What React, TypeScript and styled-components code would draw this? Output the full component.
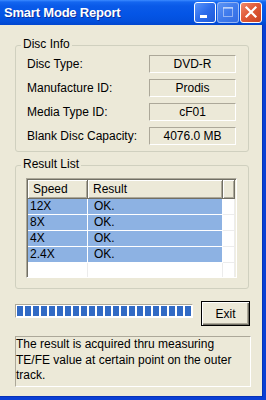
import React from 'react';
import styled, { createGlobalStyle } from 'styled-components';

const Global = createGlobalStyle`
  html, body { margin: 0; padding: 0; background: #ECE9D8; }
  body { font-family: "Liberation Sans", Arial, sans-serif; font-size: 12px; color: #000; }
  #root { width: 266px; height: 400px; }
  * { box-sizing: border-box; }
`;

const Window = styled.div`
  width: 266px;
  height: 400px;
  display: flex;
  flex-direction: column;
  background: #ECE9D8;
  overflow: hidden;
`;

const TitleBar = styled.div`
  height: 25px;
  flex: none;
  display: flex;
  align-items: flex-start;
  padding: 0 4px 0 4px;
  background: linear-gradient(
    180deg,
    #3B8BFF 0px,
    #1466F0 2px,
    #0A5AE8 6px,
    #0455E6 14px,
    #0350DD 21px,
    #0246CF 25px
  );
`;

const Title = styled.div`
  flex: 1;
  color: #fff;
  font-family: "Liberation Sans", Arial, sans-serif;
  font-weight: bold;
  font-size: 13px;
  letter-spacing: -0.2px;
  line-height: 25px;
  text-shadow: 1px 1px 0 #0B2F9E;
`;

const CaptionButtons = styled.div`
  display: flex;
  gap: 1px;
  margin-top: 2px;
`;

const CaptionButton = styled.div<{ $kind: 'min' | 'max' | 'close' }>`
  width: 22px;
  height: 21px;
  border-radius: 3px;
  display: flex;
  align-items: center;
  justify-content: center;
  border: 1px solid ${(p) => (p.$kind === 'max' ? 'rgba(255,255,255,0.55)' : '#fff')};
  background: ${(p) =>
    p.$kind === 'close'
      ? 'linear-gradient(135deg, #F08A6E 0%, #E05A38 45%, #C94222 100%)'
      : p.$kind === 'max'
      ? 'linear-gradient(135deg, #6C9EF6 0%, #4A82EE 50%, #3C72E4 100%)'
      : 'linear-gradient(135deg, #5A95FA 0%, #2C6CEB 50%, #1E5AD8 100%)'};
  opacity: ${(p) => (p.$kind === 'max' ? 0.85 : 1)};
`;

const Frame = styled.div`
  flex: 1;
  display: flex;
  flex-direction: column;
  padding: 12px 12px 0 15px;
  border-right: 3px solid #0A3FD4;
  border-bottom: 3px solid #0A3FD4;
  box-shadow: inset -1px -1px 0 #0631B8;
`;

const Group = styled.fieldset<{ $gap?: number }>`
  margin: ${(p) => p.$gap ?? 0}px 2px 0 0;
  padding: 0;
  border: 1px solid #D0D0BF;
  border-radius: 3px;
  min-width: 0;
`;

const Legend = styled.legend`
  margin-left: 5px;
  padding: 0 2px 2px;
  font-size: 12px;
  line-height: 14px;
  color: #000;
`;

const InfoGrid = styled.div`
  display: grid;
  grid-template-columns: 1fr 87px;
  grid-auto-rows: 18px;
  row-gap: 6px;
  align-items: center;
  padding: 2px 12px 6px 11px;
`;

const Label = styled.div`
  font-size: 12px;
  line-height: 14px;
  white-space: nowrap;
`;

const ValueBox = styled.div`
  height: 18px;
  border: 1px solid;
  border-color: #ACA899 #fff #fff #ACA899;
  text-align: center;
  font-size: 12px;
  line-height: 16px;
`;

const ListWrap = styled.div`
  padding: 5px 11px 10px 10px;
`;

const ListView = styled.div`
  height: 100px;
  border: 1px solid;
  border-color: #ACA899 #fff #fff #ACA899;
  box-shadow: inset 1px 1px 0 #716F64, inset -1px -1px 0 #F1EFE2;
  background: #fff;
  padding: 1px;
  overflow: hidden;
`;

const ListGrid = styled.div`
  display: grid;
  grid-template-columns: 60px 135px 1fr;
`;

const HeaderCell = styled.div<{ $pad: number }>`
  height: 19px;
  padding-left: ${(p) => p.$pad}px;
  background: #ECE9D8;
  border-right: 1px solid #716F64;
  border-bottom: 1px solid #716F64;
  box-shadow: inset 1px 1px 0 #fff, inset -1px -1px 0 #ACA899;
  font-size: 12px;
  line-height: 18px;
  white-space: nowrap;
`;

const Cell = styled.div<{ $sel?: boolean; $pad: number }>`
  height: 16px;
  padding-left: ${(p) => p.$pad}px;
  background: ${(p) => (p.$sel ? '#8DB2E3' : '#fff')};
  border-right: 1px solid ${(p) => (p.$sel ? '#fff' : '#ECECEC')};
  border-bottom: 1px solid ${(p) => (p.$sel ? '#fff' : '#ECECEC')};
  font-size: 12px;
  line-height: 15px;
  white-space: nowrap;
  color: #000;
`;

const ActionRow = styled.div`
  display: flex;
  justify-content: space-between;
  align-items: flex-start;
  margin: 12px 1px 0 0;
`;

const Progress = styled.div`
  width: 178px;
  height: 14px;
  margin-top: 3px;
  border: 1px solid;
  border-color: #ACA899 #fff #fff #ACA899;
  background: #fff;
  padding: 1px;
`;

const ProgressFill = styled.div`
  height: 100%;
  background: repeating-linear-gradient(
    90deg,
    #316AC5 0px,
    #316AC5 6px,
    transparent 6px,
    transparent 8px
  );
`;

const ExitButton = styled.button`
  width: 49px;
  height: 25px;
  padding: 0;
  border: 1px solid #000;
  background: #ECE9D8;
  box-shadow: inset 1px 1px 0 #fff, inset -1px -1px 0 #716F64, inset -2px -2px 0 #ACA899;
  font-family: "Liberation Sans", Arial, sans-serif;
  font-size: 12px;
  color: #000;
`;

const Note = styled.div`
  margin-top: 10px;
  height: 51px;
  border: 1px solid;
  border-color: #ACA899 #fff #fff #ACA899;
  font-size: 12px;
  line-height: 15.5px;
  padding: 0;
`;

const info: [string, string][] = [
  ['Disc Type:', 'DVD-R'],
  ['Manufacture ID:', 'Prodis'],
  ['Media Type ID:', 'cF01'],
  ['Blank Disc Capacity:', '4076.0 MB'],
];

const results: [string, string][] = [
  ['12X', 'OK.'],
  ['8X', 'OK.'],
  ['4X', 'OK.'],
  ['2.4X', 'OK.'],
];

const MinIcon = () => (
  <svg width="20" height="19" viewBox="0 0 20 19">
    <rect x="5" y="12" width="7" height="3" fill="#fff" />
  </svg>
);

const MaxIcon = () => (
  <svg width="20" height="19" viewBox="0 0 20 19">
    <rect x="5.5" y="4.5" width="9" height="9" fill="none" stroke="rgba(255,255,255,0.55)" strokeWidth="1" />
    <rect x="5" y="4" width="10" height="2" fill="rgba(255,255,255,0.55)" />
  </svg>
);

const CloseIcon = () => (
  <svg width="20" height="19" viewBox="0 0 20 19">
    <path d="M5.5 4.5 L14.5 13.5 M14.5 4.5 L5.5 13.5" stroke="#fff" strokeWidth="2.2" strokeLinecap="square" />
  </svg>
);

export default function App() {
  return (
    <>
      <Global />
      <Window>
        <TitleBar>
          <Title>Smart Mode Report</Title>
          <CaptionButtons>
            <CaptionButton $kind="min"><MinIcon /></CaptionButton>
            <CaptionButton $kind="max"><MaxIcon /></CaptionButton>
            <CaptionButton $kind="close"><CloseIcon /></CaptionButton>
          </CaptionButtons>
        </TitleBar>
        <Frame>
          <Group>
            <Legend>Disc Info</Legend>
            <InfoGrid>
              {info.map(([k, v]) => (
                <React.Fragment key={k}>
                  <Label>{k}</Label>
                  <ValueBox>{v}</ValueBox>
                </React.Fragment>
              ))}
            </InfoGrid>
          </Group>
          <Group $gap={5}>
            <Legend>Result List</Legend>
            <ListWrap>
              <ListView>
                <ListGrid>
                  <HeaderCell $pad={5}>Speed</HeaderCell>
                  <HeaderCell $pad={5}>Result</HeaderCell>
                  <HeaderCell $pad={0} />
                  {results.map(([s, r]) => (
                    <React.Fragment key={s}>
                      <Cell $sel $pad={2}>{s}</Cell>
                      <Cell $sel $pad={6}>{r}</Cell>
                      <Cell $pad={0} />
                    </React.Fragment>
                  ))}
                  <Cell $pad={2} />
                  <Cell $pad={6} />
                  <Cell $pad={0} />
                </ListGrid>
              </ListView>
            </ListWrap>
          </Group>
          <ActionRow>
            <Progress>
              <ProgressFill />
            </Progress>
            <ExitButton>Exit</ExitButton>
          </ActionRow>
          <Note>
            The result is acquired thru measuring TE/FE value at certain point on the outer track.
          </Note>
        </Frame>
      </Window>
    </>
  );
}
